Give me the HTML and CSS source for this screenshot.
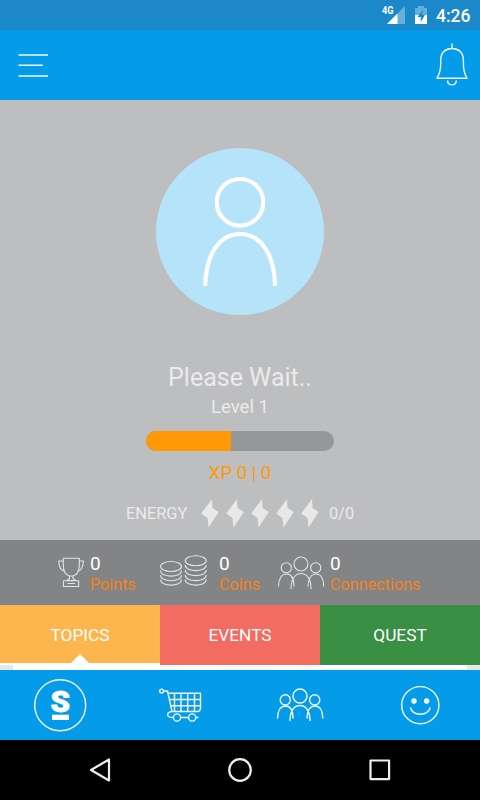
FILE: index.html
```
<!DOCTYPE html>
<html lang="en">
<head>
<meta charset="utf-8">
<title>Profile</title>
<link rel="stylesheet" href="styles.css">
</head>
<body>
<svg class="defs" width="0" height="0" aria-hidden="true">
  <symbol id="bolt" viewBox="0 0 20 31"><path d="M12 1 12.500 10 18.800 14 8.500 29.500 7.500 20 1.200 15.500Z"/></symbol>
  <symbol id="people" viewBox="0 0 48 36">
    <circle cx="24" cy="9" r="7"/><circle cx="9.3" cy="12.8" r="5.1"/><circle cx="38.7" cy="12.8" r="5.1"/>
    <path d="M14 34C14 24 18 18.500 24 18.500S34 24 34 34M1.500 31.500C1.500 24 4.500 19 9.500 19S17 24 17 31.500M31 31.500C31 24 34 19 39 19S46.800 24 46.800 31.500"/>
  </symbol>
</svg>
<div class="screen">
  <div class="status">
    <svg class="signals" width="48" height="24" viewBox="381 4 48 24">
      <path d="M405 6V24H387Z" fill="#69aedb"/><path d="M397.500 13.500V24H387Z" fill="#fff"/>
      <path d="M418 6h6v2h3v16h-12V8h3Z" fill="#69aedb"/><path d="M415 15h12v9h-12Z" fill="#fff"/>
      <path d="M423 9.500 417.500 17h3.300v5L425 14.800h-3Z" fill="#1b88c9"/>
      <text class="net" x="382" y="14.300" textLength="11.500" lengthAdjust="spacingAndGlyphs">4G</text>
    </svg>
    <span class="clock">4:26</span>
  </div>
  <header class="header">
    <svg class="line" width="32" height="26" viewBox="17 52 32 26"><path d="M18.500 55H48M18.500 65.300H42.700M18.500 76H48" stroke-width="1.500"/></svg>
    <svg class="line" width="34" height="46" viewBox="435 43 34 46"><path d="M452 44.500V49.500M437 79.200H467C464.500 75 463.400 72 463.400 65V61C463.400 53.500 458.500 49.500 452 49.500S440.700 53.500 440.700 61V65C440.700 72 439.500 75 437 79.200ZM447.500 81.500C447.800 87.300 456 87.300 456.300 81.500"/></svg>
  </header>
  <main class="profile">
    <div class="avatar">
      <svg width="80" height="114" viewBox="200 174 80 114"><circle cx="240" cy="202.300" r="23.300"/><path d="M205.200 286C206 253 220 234 240 234S274.500 253 275 286"/></svg>
    </div>
    <h1 class="name">Please Wait..</h1>
    <div class="level">Level 1</div>
    <div class="bar"><div class="fill"></div></div>
    <div class="xp">XP 0 | 0</div>
    <div class="energy">
      <span class="energy-label">ENERGY</span>
      <div class="bolts">
        <svg><use href="#bolt"/></svg><svg><use href="#bolt"/></svg><svg><use href="#bolt"/></svg><svg><use href="#bolt"/></svg><svg><use href="#bolt"/></svg>
      </div>
      <span>0/0</span>
    </div>
  </main>
  <section class="stats">
    <div class="stat points">
      <svg class="line thin" width="27" height="32" viewBox="58 556 27 32"><path d="M63.300 558.300H79.300V565C79.300 571 76.500 575 73 576H69.500C66 575 63.300 571 63.300 565ZM63.300 561H58.700C59 567 61 571 65.300 571.500M79.300 561H83.500C83 567 81 571 77.300 571.500M69.500 576V578.500L67 580.500H75.700L73 578.500V576M63.500 580.800H78.700V586.500H63.500ZM67.500 583.500H75"/></svg>
      <div><b>0</b><span>Points</span></div>
    </div>
    <div class="stat coins">
      <svg class="line thin" width="48" height="34" viewBox="160 554 48 34">
        <ellipse cx="171" cy="566.500" rx="10.500" ry="5"/><path d="M160.500 570.500C160.500 578 181.500 578 181.500 570.500M160.500 575.300C160.500 582.500 181.500 582.500 181.500 575.300M160.500 579.500C160.500 587 181.500 587 181.500 579.500"/>
        <ellipse cx="195.700" cy="560.700" rx="10.500" ry="5"/><path d="M185.200 565C185.200 572.500 206.200 572.500 206.200 565M185.200 570C185.200 577.500 206.200 577.500 206.200 570M185.200 575C185.200 582.500 206.200 582.500 206.200 575M185.200 579.500C185.200 587 206.200 587 206.200 579.500"/>
      </svg>
      <div><b>0</b><span>Coins</span></div>
    </div>
    <div class="stat connections">
      <svg class="line thin" width="48" height="36"><use href="#people"/></svg>
      <div><b>0</b><span>Connections</span></div>
    </div>
  </section>
  <div class="tabs">
    <div class="tab topics">TOPICS</div><div class="tab events">EVENTS</div><div class="tab quest">QUEST</div>
  </div>
  <div class="strip"></div>
  <nav class="nav">
    <div class="item"><svg class="line" width="54" height="54" viewBox="33 678 54 54"><circle cx="60.200" cy="705.200" r="25.500"/><text class="logo" x="50.500" y="712" textLength="19.500" lengthAdjust="spacingAndGlyphs">S</text><path class="solid" d="M52 714.700H69V720H52Z"/></svg></div>
    <div class="item"><svg class="line" width="44" height="36" viewBox="158 687 44 36"><circle cx="161.600" cy="691" r="1.900"/><path d="M163.500 691H167.500L172 711.500H198Q200.500 711 200.500 708V693.300H168.500M174.500 693.300V711.500M181 693.300V711.500M187.700 693.300V711.500M194.500 693.300V711.500M169.500 699.500H200.500M170.700 705.700H200.500M172 711.500C166 712 166 717.500 173 717.500M180.500 717.500H188.500M195.700 717.500H198.500"/><circle cx="177" cy="717.500" r="3.600"/><circle cx="192.200" cy="717.500" r="3.600"/></svg></div>
    <div class="item"><svg class="line" width="48" height="36"><use href="#people"/></svg></div>
    <div class="item"><svg class="line" width="42" height="42" viewBox="399 684 42 42"><circle cx="420.300" cy="705.200" r="18.600"/><circle class="solid" cx="414" cy="701" r="2.700"/><circle class="solid" cx="426.600" cy="701" r="2.700"/><path d="M410.300 707.500C413 716.500 427.500 716.500 430.300 707.500"/></svg></div>
  </nav>
  <footer class="system">
    <svg class="line" width="24" height="28" viewBox="88 756 24 28"><path d="M109 759.500V780.500L91 770Z"/></svg>
    <svg class="line" width="28" height="28" viewBox="226 756 28 28"><circle cx="240" cy="770" r="10.800"/></svg>
    <svg class="line" width="24" height="28" viewBox="368 756 24 28"><rect x="370.500" y="760.500" width="18.600" height="18.600"/></svg>
  </footer>
</div>
</body>
</html>
```
FILE: styles.css
```
* { box-sizing: border-box; }
body { margin: 0; font-family: Roboto, "Liberation Sans", sans-serif; }
svg { display: block; flex: none; }
.defs { position: absolute; }
.screen { width: 480px; height: 800px; display: flex; flex-direction: column; overflow: hidden; }
.line { fill: none; stroke: #f4f8fa; stroke-width: 1.4; stroke-linejoin: round; }
.thin { stroke: #e3e4e5; stroke-width: 1.1; }
.solid { fill: #fff; stroke: none; }

.status { height: 30px; background: #1b88c9; display: flex; justify-content: flex-end; align-items: center; gap: 7px; padding: 2px 10px 0 0; }
.net { fill: #fff; font-size: 10.5px; font-weight: 700; }
.clock { color: #fff; font-size: 17.5px; font-weight: 500; width: 34px; line-height: 24px; white-space: nowrap; }
.header { height: 70px; background: #049be8; display: flex; justify-content: space-between; align-items: center; padding: 0 11px 1px 17px; }

.profile { height: 440px; background: #bcbec0; display: flex; flex-direction: column; align-items: center; color: #ebebeb; padding-top: 48px; }
.avatar { width: 168px; height: 167px; border-radius: 50%; background: #b5e3fa; display: flex; justify-content: center; padding-top: 26px; }
.avatar svg { fill: none; stroke: #fff; stroke-width: 4.2; }
.name { margin: 48px 0 0; font-size: 25px; font-weight: 400; line-height: 30px; }
.level { margin-top: 2px; font-size: 18.5px; line-height: 24px; }
.bar { margin-top: 12px; width: 188px; height: 19.5px; border-radius: 10px; background: #969799; overflow: hidden; flex: none; }
.fill { width: 85px; height: 100%; background: #ff9908; }
.xp { margin-top: 10.5px; color: #ff9908; font-size: 18.5px; line-height: 24px; }
.energy { display: flex; margin-top: 13px; height: 31px; line-height: 31px; font-size: 16.4px; }
.energy-label { width: 74px; }
.bolts { display: flex; gap: 5px; margin-right: 9px; }
.bolts svg { width: 20px; height: 31px; fill: #e8e8e8; }

.stats { height: 65px; background: #828486; display: flex; padding: 13px 0 0 58px; }
.stat { display: flex; }
.stat b { display: block; font-size: 19px; font-weight: 400; line-height: 22px; color: #fff; }
.stat span { display: block; font-size: 16.2px; line-height: 20px; color: #f58220; }
.stat svg { margin-top: 3px; }
.points { width: 102px; gap: 5px; }
.coins { width: 117px; gap: 11px; }
.coins svg { margin-top: 1px; }
.connections { gap: 5px; }
.connections svg { margin-top: 2px; }

.tabs { height: 60px; display: flex; }
.tab { flex: 1; height: 60px; line-height: 61px; text-align: center; color: #fff; font-size: 17.3px; }
.topics { position: relative; background: #fdb64e; border-bottom: 2px solid #fff; }
.topics::after { content: ""; position: absolute; left: 71px; bottom: 0; border: solid transparent; border-width: 0 9px 9px; border-bottom-color: #fff; }
.events { background: #f26c61; }
.quest { background: #398f43; }
.strip { height: 5px; background: #e7e7e7; padding: 0 13px; }
.strip::before { content: ""; display: block; height: 5px; background: #fff; }
.nav { height: 70px; background: #049be8; display: flex; }
.item { width: 120px; display: flex; justify-content: center; align-items: center; }
.logo { fill: #fff; stroke: #fff; stroke-width: .8px; font-size: 30px; font-weight: 900; }
.system { height: 60px; background: #000; display: flex; justify-content: space-between; align-items: center; padding: 0 88px; }
.system .line { stroke-width: 2.2; stroke: #eee; }
```
